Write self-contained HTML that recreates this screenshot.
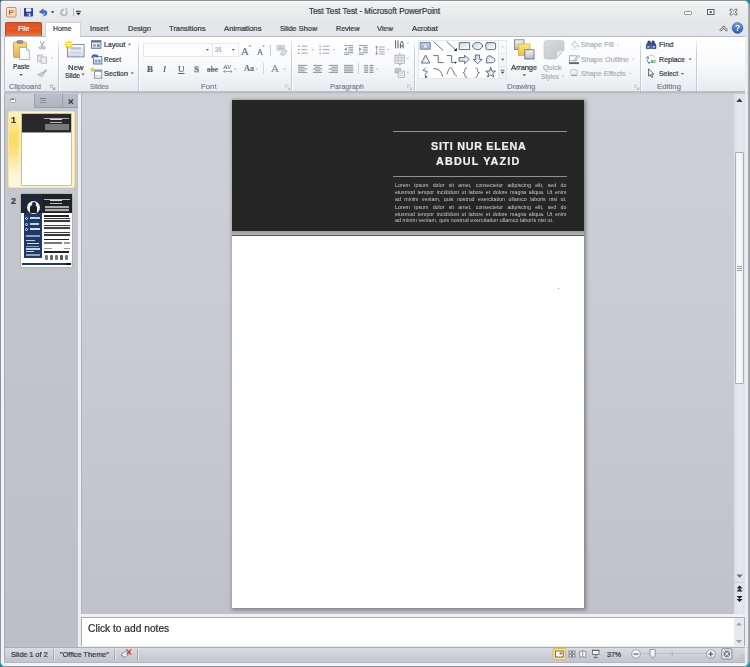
<!DOCTYPE html>
<html><head><meta charset="utf-8">
<style>
*{box-sizing:border-box;margin:0;padding:0}
html,body{width:750px;height:667px;overflow:hidden;background:#e9ecf0;font-family:"Liberation Sans",sans-serif;font-size:7.4px;color:#3b3f45}
.a{position:absolute}
.t{position:absolute;white-space:nowrap;line-height:10px;color:#30343a;-webkit-text-stroke:0.22px;will-change:transform}
#win{position:absolute;left:0;top:0;width:750px;height:667px;background:#e8eaed;overflow:hidden}
#titlebar{left:0;top:0;width:750px;height:22px;background:linear-gradient(#f3f4f5,#eceded 40%,#e6e7e9)}
#tabsrow{left:0;top:21px;width:750px;height:16px;background:linear-gradient(#e6e7e9,#e3e5e8)}
#ribbon{left:4px;top:36px;width:742px;height:56.3px;background:linear-gradient(#ffffff 0%,#f8f9fb 50%,#e8ebef 100%);border:1px solid #b9bec6;border-radius:2px}
.sep{position:absolute;top:38px;width:2px;height:53.4px;background:linear-gradient(90deg,#c6cad0 0,#c6cad0 50%,rgba(255,255,255,.85) 50%);-webkit-mask-image:linear-gradient(rgba(0,0,0,0),#000 30%);mask-image:linear-gradient(rgba(0,0,0,0),#000 30%)}
.gl{color:#7d828b}
.dis{color:#a9adb4}
.w{color:#fff}
.c{transform:translateX(-50%)}
.sf{font-family:"Liberation Serif",serif;font-size:9px;color:#5a5f68}
</style></head><body>
<div id="win">
<div class="a" id="titlebar"></div>
<div class="a" id="tabsrow"></div>

<div class="a" style="left:5px;top:21.5px;width:37px;height:15px;background:linear-gradient(#d8532e,#e85c2a 42%,#e24e1e 52%,#f07e46);border:1px solid #b8482a;border-bottom:none;border-radius:2px 2px 0 0"></div>
<div class="a" style="left:44.5px;top:21.5px;width:36px;height:15.5px;background:#fff;border:1px solid #cdd0d6;border-bottom:none;border-radius:2px 2px 0 0"></div>
<div class="a" id="ribbon"></div>
<div class="a" style="left:45.5px;top:36px;width:34px;height:1px;background:#fff"></div>
<div class="sep" style="left:58px"></div>
<div class="sep" style="left:138px"></div>
<div class="sep" style="left:291px"></div>
<div class="sep" style="left:414px"></div>
<div class="sep" style="left:640px"></div>
<div class="sep" style="left:696px"></div>
<div class="a" style="left:143px;top:43px;width:70px;height:14px;border:1px solid #e6e8ec;background:#fdfdfe"></div>
<div class="a" style="left:212px;top:43px;width:27px;height:14px;border:1px solid #e6e8ec;background:#fdfdfe"></div>
<div class="t sf" style="left:146.5px;top:63.5px;font-weight:bold">B</div>
<div class="t sf" style="left:163px;top:63.5px;font-style:italic">I</div>
<div class="t sf" style="left:177.5px;top:63.5px;text-decoration:underline">U</div>
<div class="t sf" style="left:194px;top:63.5px;font-weight:bold;color:#777c85;text-shadow:0.6px 0.6px 0.5px #b5b9c0">S</div>
<div class="t sf" style="left:207px;top:64.5px;font-size:7.4px;font-weight:bold;text-decoration:line-through;color:#70757e;-webkit-text-stroke:0.1px">abc</div>
<div class="t sf" style="left:223.3px;top:62.6px;font-size:6.6px;line-height:8px;color:#6c717a;letter-spacing:-0.2px;-webkit-text-stroke:0.1px">AV</div>
<div class="t sf" style="left:243.6px;top:64.2px;font-size:8.4px;color:#6f747d;font-weight:bold;-webkit-text-stroke:0.12px">Aa</div>
<div class="t sf" style="left:241px;top:44.5px;font-size:11px;line-height:12px;color:#6c717a">A</div>
<div class="t sf" style="left:257px;top:47px;font-size:8.5px;color:#6c717a">A</div>
<div class="t sf" style="left:270.5px;top:62px;font-size:11px;line-height:12px;color:#8a8f98">A</div>
<div class="a" style="left:270px;top:45px;width:1px;height:11px;background:#c9cdd3"></div>
<div class="a" style="left:263px;top:63px;width:1px;height:11px;background:#d3d6dc"></div>
<div class="a" style="left:358px;top:63px;width:1px;height:11px;background:#d3d6dc"></div>
<div class="a" style="left:418px;top:40px;width:81px;height:39px;border:1px solid #e3e6ea;background:#fff"></div>
<div class="a" style="left:498px;top:40px;width:9px;height:39px;border:1px solid #e3e6ea;background:linear-gradient(#fbfcfd,#eef0f3)"></div>
<div class="a" style="left:498px;top:53px;width:9px;height:1px;background:#e3e6ea"></div>
<div class="a" style="left:498px;top:66px;width:9px;height:1px;background:#e3e6ea"></div>
<div class="t " style="left:309.3px;top:5.8px;font-size:8.4px;transform-origin:0 50%;transform:scaleX(0.9570);color:#30343a;">Test Test Test - Microsoft PowerPoint</div>
<div class="t w" style="left:17.6px;top:23.5px;font-size:7.8px;transform-origin:0 50%;transform:scaleX(0.9070);">File</div>
<div class="t " style="left:53.0px;top:23.5px;font-size:7.8px;transform-origin:0 50%;transform:scaleX(0.8940);">Home</div>
<div class="t " style="left:90.4px;top:23.5px;font-size:7.8px;transform-origin:0 50%;transform:scaleX(0.9535);">Insert</div>
<div class="t " style="left:128.0px;top:23.5px;font-size:7.8px;transform-origin:0 50%;transform:scaleX(0.9473);">Design</div>
<div class="t " style="left:169.0px;top:23.5px;font-size:7.8px;transform-origin:0 50%;transform:scaleX(0.9668);">Transitions</div>
<div class="t " style="left:224.0px;top:23.5px;font-size:7.8px;transform-origin:0 50%;transform:scaleX(0.9745);">Animations</div>
<div class="t " style="left:280.0px;top:23.5px;font-size:7.8px;transform-origin:0 50%;transform:scaleX(0.9558);">Slide Show</div>
<div class="t " style="left:335.5px;top:23.5px;font-size:7.8px;transform-origin:0 50%;transform:scaleX(0.9267);">Review</div>
<div class="t " style="left:377.3px;top:23.5px;font-size:7.8px;transform-origin:0 50%;transform:scaleX(0.9543);">View</div>
<div class="t " style="left:411.5px;top:23.5px;font-size:7.8px;transform-origin:0 50%;transform:scaleX(0.9598);">Acrobat</div>
<div class="t gl" style="left:9.0px;top:81.8px;font-size:7.8px;transform-origin:0 50%;transform:scaleX(0.9585);">Clipboard</div>
<div class="t gl" style="left:89.6px;top:81.8px;font-size:7.8px;transform-origin:0 50%;transform:scaleX(0.8802);">Slides</div>
<div class="t gl" style="left:201.3px;top:81.8px;font-size:7.8px;transform-origin:0 50%;transform:scaleX(0.9867);">Font</div>
<div class="t gl" style="left:330.0px;top:81.8px;font-size:7.8px;transform-origin:0 50%;transform:scaleX(0.9334);">Paragraph</div>
<div class="t gl" style="left:507.3px;top:81.8px;font-size:7.8px;transform-origin:0 50%;transform:scaleX(0.9926);">Drawing</div>
<div class="t gl" style="left:657.0px;top:81.8px;font-size:7.8px;transform-origin:0 50%;transform:scaleX(1.0063);">Editing</div>
<div class="t " style="left:12.7px;top:62.1px;font-size:7.8px;transform-origin:0 50%;transform:scaleX(0.8323);">Paste</div>
<div class="t " style="left:67.5px;top:63.0px;font-size:7.8px;transform-origin:0 50%;transform:scaleX(0.9933);">New</div>
<div class="t " style="left:65.0px;top:71.1px;font-size:7.8px;transform-origin:0 50%;transform:scaleX(0.8648);">Slide</div>
<div class="t " style="left:104.0px;top:39.8px;font-size:7.8px;transform-origin:0 50%;transform:scaleX(0.9095);">Layout</div>
<div class="t " style="left:104.0px;top:54.9px;font-size:7.8px;transform-origin:0 50%;transform:scaleX(0.8343);">Reset</div>
<div class="t " style="left:104.0px;top:69.3px;font-size:7.8px;transform-origin:0 50%;transform:scaleX(0.9225);">Section</div>
<div class="t dis" style="left:214.7px;top:44.9px;font-size:7.8px;transform-origin:0 50%;transform:scaleX(0.7607);">36</div>
<div class="t " style="left:511.3px;top:63.1px;font-size:7.8px;transform-origin:0 50%;transform:scaleX(0.9369);">Arrange</div>
<div class="t dis" style="left:543.3px;top:63.1px;font-size:7.8px;transform-origin:0 50%;transform:scaleX(0.9379);">Quick</div>
<div class="t dis" style="left:541.3px;top:71.7px;font-size:7.8px;transform-origin:0 50%;transform:scaleX(0.8474);">Styles</div>
<div class="t dis" style="left:581.3px;top:39.9px;font-size:7.8px;transform-origin:0 50%;transform:scaleX(0.9428);">Shape Fill</div>
<div class="t dis" style="left:581.3px;top:54.9px;font-size:7.8px;transform-origin:0 50%;transform:scaleX(0.9710);">Shape Outline</div>
<div class="t dis" style="left:581.3px;top:69.3px;font-size:7.8px;transform-origin:0 50%;transform:scaleX(0.9231);">Shape Effects</div>
<div class="t " style="left:658.8px;top:39.9px;font-size:7.8px;transform-origin:0 50%;transform:scaleX(0.9556);">Find</div>
<div class="t " style="left:658.8px;top:54.9px;font-size:7.8px;transform-origin:0 50%;transform:scaleX(0.9085);">Replace</div>
<div class="t " style="left:658.8px;top:69.3px;font-size:7.8px;transform-origin:0 50%;transform:scaleX(0.8857);">Select</div>
<svg class="a" style="left:0;top:0" width="750" height="94" viewBox="0 0 750 94">
<defs>
<linearGradient id="gb" x1="0" y1="0" x2="0" y2="1"><stop offset="0" stop-color="#fdfeff"/><stop offset="1" stop-color="#cfdbe8"/></linearGradient>
<linearGradient id="gy" x1="0" y1="0" x2="0" y2="1"><stop offset="0" stop-color="#f7d98a"/><stop offset="1" stop-color="#e6b04a"/></linearGradient>
<linearGradient id="gg" x1="0" y1="0" x2="0" y2="1"><stop offset="0" stop-color="#e6e7ea"/><stop offset="1" stop-color="#c4c6cb"/></linearGradient>
<linearGradient id="gh" x1="0" y1="0" x2="0" y2="1"><stop offset="0" stop-color="#6fa0dd"/><stop offset="1" stop-color="#2a5cab"/></linearGradient>
</defs>
<!-- QAT -->
<rect x="6.5" y="7.5" width="9.5" height="9.5" rx="1" fill="#fbe1cc" stroke="#b47a5c" stroke-width="0.8"/>
<text x="11.2" y="15.3" font-family="Liberation Sans,sans-serif" font-weight="bold" font-size="8" fill="#cc651c" text-anchor="middle">P</text>
<line x1="20.5" y1="8" x2="20.5" y2="16" stroke="#d5d8dd" stroke-width="1"/>
<rect x="24" y="8" width="9" height="8.6" rx="0.8" fill="#2f3f95"/>
<rect x="26" y="8.3" width="5.2" height="3.4" fill="#eef2fa"/>
<rect x="27" y="13.3" width="3.6" height="3" fill="#c9d3ee"/>
<rect x="27.3" y="13.8" width="1.3" height="2.2" fill="#2f3f95"/>
<path d="M38.8 12 L43.4 8.2 L43.6 10.4 C46.6 10 48 12 47 14.2 C46.2 15.6 44.4 16.2 42.4 16.2 C44.2 15.4 45 14.2 44.4 13.2 C44 12.6 43.8 12.6 43.6 12.6 L43.8 14.8 Z" fill="#3a6cc8"/>
<path d="M51 11.3 L54.4 11.3 L52.7 13.3Z" fill="#222"/>
<path d="M64 9.6 A2.9 2.9 0 1 0 66.6 11.4" fill="none" stroke="#b3b7bd" stroke-width="1.9"/>
<path d="M64.6 8.4 L67.6 8.6 L66.4 11.4Z" fill="#b3b7bd"/>
<line x1="73.5" y1="8.4" x2="73.5" y2="16" stroke="#aeb2b9" stroke-width="1"/>
<rect x="76" y="10.8" width="4.8" height="1" fill="#222"/>
<path d="M76 12.8 L80.8 12.8 L78.4 15.2Z" fill="#222"/>
<!-- window controls -->
<rect x="684.5" y="11.5" width="7" height="3" rx="0.8" fill="#fbfbfc" stroke="#7d838c" stroke-width="0.9"/>
<rect x="707.5" y="9.5" width="6.5" height="5" fill="#fbfbfc" stroke="#4a4f57" stroke-width="0.9"/>
<rect x="709.6" y="11.2" width="2.3" height="1.8" fill="#4a4f57"/>
<path d="M730 9.3 L731.8 9.3 L733.5 10.9 L735.2 9.3 L737 9.3 L737 10.6 L735 12.1 L737 13.6 L737 14.9 L735.2 14.9 L733.5 13.3 L731.8 14.9 L730 14.9 L730 13.6 L732 12.1 L730 10.6Z" fill="#fbfbfc" stroke="#5f646c" stroke-width="0.9" stroke-linejoin="round"/>
<path d="M720.6 30.2 L723.6 27 L726.6 30.2" fill="none" stroke="#6a6f78" stroke-width="2.4" stroke-linejoin="round" stroke-linecap="round"/>
<path d="M720.6 30.2 L723.6 27 L726.6 30.2" fill="none" stroke="#ffffff" stroke-width="0.9" stroke-linejoin="round" stroke-linecap="round"/>
<circle cx="737.5" cy="28" r="5.4" fill="url(#gh)" stroke="#2d5596" stroke-width="0.6"/>
<text x="737.5" y="31.2" font-family="Liberation Sans,sans-serif" font-weight="bold" font-size="8.6" fill="#fff" text-anchor="middle">?</text>
<!-- Clipboard group -->
<rect x="13.5" y="42" width="13" height="15.5" rx="1.2" fill="url(#gy)" stroke="#c99a3c" stroke-width="0.8"/>
<rect x="17" y="40.6" width="6" height="2.8" rx="0.8" fill="#8d9097" stroke="#6d7077" stroke-width="0.5"/>
<path d="M19.5 47.5 L26.5 47.5 L29.3 50.3 L29.3 59.5 L19.5 59.5Z" fill="#fbfcfe" stroke="#9aa3b4" stroke-width="0.8"/>
<path d="M26.5 47.5 L26.5 50.3 L29.3 50.3" fill="#dfe5ee" stroke="#9aa3b4" stroke-width="0.6"/>
<path d="M19.2 74 L22.8 74 L21 76Z" fill="#555a62"/>
<g stroke="#9a9ea6" fill="none" stroke-width="1">
<path d="M40.4 41.2 L43.2 46.6 M44.2 41.2 L41.4 46.6"/>
<circle cx="40.7" cy="47.8" r="1.2"/><circle cx="43.9" cy="47.8" r="1.2"/>
</g>
<rect x="37.5" y="55" width="5" height="6.3" fill="#e4e6ea" stroke="#a9adb5" stroke-width="0.7"/>
<rect x="41" y="57" width="5.4" height="6.2" fill="#eceef1" stroke="#a9adb5" stroke-width="0.7"/>
<path d="M50.5 57.5 L53 57.5 L51.7 59Z" fill="#b5b9c0"/>
<path d="M45.8 69.2 L47.2 70.4 L43.5 74.2 L41.8 72.8Z" fill="#b0b3ba"/>
<path d="M41.6 72.6 L43.8 74.5 L41.5 77 L37.4 74.6Z" fill="#c5c8ce" stroke="#a4a8af" stroke-width="0.5"/>
<path d="M50.6 85.2 L50.6 88.2 M50.6 85.2 L53.6 85.2" stroke="#9a9ea6" stroke-width="0.8" fill="none"/>
<path d="M52.2 87 L54.8 89.4 M54.9 87.3 L54.9 89.5 L52.6 89.5" stroke="#8a8e96" stroke-width="0.8" fill="none"/>
<!-- Slides group -->
<rect x="67.5" y="44.5" width="16.6" height="12.4" fill="url(#gb)" stroke="#7b8696" stroke-width="0.9"/>
<rect x="70.5" y="47.2" width="10.6" height="2.4" fill="#b7c3d3"/>
<rect x="70.5" y="51.6" width="10.6" height="1.8" fill="#c9d4e3"/>
<g stroke="#f0d21e" stroke-width="1.5"><path d="M68.7 40.8 L68.7 48.6 M64.6 44.7 L72.9 44.7 M65.7 41.8 L71.7 47.6 M71.7 41.8 L65.7 47.6"/></g>
<circle cx="68.7" cy="44.7" r="1.7" fill="#fff6a0"/>
<path d="M81.4 73.6 L84.6 73.6 L83 75.4Z" fill="#555a62"/>
<rect x="91.5" y="40.7" width="9.4" height="7.6" fill="url(#gb)" stroke="#5f7088" stroke-width="0.9"/>
<rect x="91.5" y="40.7" width="9.4" height="1.8" fill="#5f7088"/>
<rect x="93" y="44" width="3" height="3" fill="#9fb0c8"/>
<rect x="97" y="44" width="2.6" height="3" fill="#7d92b2"/>
<path d="M128 43.8 L131 43.8 L129.5 45.5Z" fill="#555a62"/>
<rect x="93.6" y="56.6" width="8.2" height="7.4" fill="url(#gb)" stroke="#5f7088" stroke-width="0.9"/>
<rect x="95" y="59.6" width="2.4" height="3" fill="#8ea2c0"/>
<rect x="98.2" y="59.6" width="2.4" height="3" fill="#8ea2c0"/>
<path d="M91.4 57.8 C91.2 54.6 94.6 53.4 96.8 55 L97.6 54 L98 57.4 L94.6 57 L95.6 56 C94.4 55.2 92.8 56 93 57.8Z" fill="#2f5fb4"/>
<rect x="94.4" y="70" width="7.4" height="8.2" fill="#fbfcfe" stroke="#7b8696" stroke-width="0.9"/>
<rect x="94.4" y="70" width="7.4" height="1.8" fill="#8d98a8"/>
<rect x="94.4" y="75.4" width="7.4" height="0.8" fill="#b7c0cf"/>
<g stroke="#ecc820" stroke-width="0.9"><path d="M92.6 67.2 L92.6 72 M90.2 69.6 L95 69.6 M91 68 L94.3 71.2 M94.3 68 L91 71.2"/></g>
<path d="M130.8 72.6 L133.8 72.6 L132.3 74.3Z" fill="#555a62"/>
</svg>
<svg class="a" style="left:0;top:0" width="750" height="94" viewBox="0 0 750 94">
<defs>
<linearGradient id="sb" x1="0" y1="0" x2="1" y2="1"><stop offset="0" stop-color="#c9d9e8"/><stop offset="1" stop-color="#ffffff"/></linearGradient>
<linearGradient id="qs" x1="0" y1="0" x2="1" y2="1"><stop offset="0" stop-color="#d9dadd"/><stop offset="1" stop-color="#c2c4c8"/></linearGradient>
<linearGradient id="ag" x1="0" y1="0" x2="0" y2="1"><stop offset="0" stop-color="#f4f5f7"/><stop offset="1" stop-color="#b4b9c2"/></linearGradient>
<linearGradient id="ay" x1="0" y1="0" x2="0" y2="1"><stop offset="0" stop-color="#fbe58a"/><stop offset="1" stop-color="#e9c23c"/></linearGradient>
</defs>
<!-- Font group small glyphs -->
<path d="M206 49 L209 49 L207.5 50.8Z" fill="#555a62"/>
<path d="M231.8 49 L234.8 49 L233.3 50.8Z" fill="#555a62"/>
<path d="M248.6 46.6 L250 44.8 L251.4 46.6Z" fill="#8a8f98"/>
<path d="M262.2 45.6 L263.5 47.2 L264.8 45.6Z" fill="#8a8f98"/>
<!-- clear formatting -->
<g opacity="0.9">
<rect x="277" y="45.6" width="7.4" height="4.6" fill="#e4e6ea" stroke="#a2a6ae" stroke-width="0.6"/>
<path d="M278.2 47 L283.2 47 M278.2 48.6 L283.2 48.6" stroke="#8d929a" stroke-width="0.7"/>
<path d="M284.6 49.2 L287.4 51.2 L283.6 55.4 L280.6 53.4Z" fill="#d5d7dc" stroke="#9a9ea6" stroke-width="0.6"/>
<path d="M280 54 L283 56" stroke="#b0b4bb" stroke-width="0.8"/>
</g>
<!-- AV arrows -->
<path d="M223.6 71.5 L232 71.5 M223.6 71.5 L225 70.3 M223.6 71.5 L225 72.7 M232 71.5 L230.6 70.3 M232 71.5 L230.6 72.7" stroke="#7d828b" stroke-width="0.7" fill="none"/>
<path d="M234 68.6 L236.6 68.6 L235.3 70.1Z" fill="#b5b9c0"/>
<path d="M255.4 68.6 L258 68.6 L256.7 70.1Z" fill="#b5b9c0"/>
<path d="M283.4 68.6 L286 68.6 L284.7 70.1Z" fill="#b5b9c0"/>
<path d="M285.6 85.2 L285.6 88.2 M285.6 85.2 L288.6 85.2" stroke="#c0c4ca" stroke-width="0.8" fill="none"/>
<path d="M287.2 87 L289.8 89.4 M289.9 87.3 L289.9 89.5 L287.6 89.5" stroke="#b5b9c0" stroke-width="0.8" fill="none"/>
<!-- Paragraph row1 -->
<g stroke="#9a9ea6" stroke-width="0.9" fill="none">
<path d="M301.4 46.2 L307.4 46.2 M301.4 49.7 L307.4 49.7 M301.4 53.2 L307.4 53.2"/>
<path d="M322.8 46.2 L329.4 46.2 M322.8 49.7 L329.4 49.7 M322.8 53.2 L329.4 53.2"/>
</g>
<g fill="#8a8f98"><rect x="298.2" y="45.6" width="1.4" height="1.3"/><rect x="298.2" y="49.1" width="1.4" height="1.3"/><rect x="298.2" y="52.6" width="1.4" height="1.3"/>
<rect x="319.6" y="45.2" width="1" height="2"/><rect x="319.6" y="48.7" width="1" height="2"/><rect x="319.6" y="52.2" width="1" height="2"/></g>
<path d="M311.4 49 L314 49 L312.7 50.5Z" fill="#b5b9c0"/>
<path d="M332.8 49 L335.4 49 L334.1 50.5Z" fill="#b5b9c0"/>
<g stroke="#8d929a" stroke-width="0.9" fill="none">
<path d="M344.2 45.6 L353.2 45.6 M348.4 47.4 L353.2 47.4 M348.4 49.2 L353.2 49.2 M348.4 51 L353.2 51 M344.2 52.8 L353.2 52.8 M344.2 54.4 L349 54.4"/>
<path d="M358.8 45.6 L367.8 45.6 M363 47.4 L367.8 47.4 M363 49.2 L367.8 49.2 M363 51 L367.8 51 M358.8 52.8 L367.8 52.8 M358.8 54.4 L363.6 54.4"/>
</g>
<path d="M346.8 47.2 L344.2 49.2 L346.8 51.2Z" fill="#8d929a"/>
<path d="M359 47.2 L361.6 49.2 L359 51.2Z" fill="#8d929a"/>
<g stroke="#9a9ea6" stroke-width="0.9" fill="none">
<path d="M379 47 L384.8 47 M379 49.4 L384.8 49.4 M379 51.8 L384.8 51.8 M379 54 L384.8 54"/>
<path d="M376.6 46 L376.6 54.4"/>
</g>
<path d="M375.2 47.4 L376.6 45.4 L378 47.4Z M375.2 53 L376.6 55 L378 53Z" fill="#8a8f98"/>
<path d="M386.8 49 L389.4 49 L388.1 50.5Z" fill="#b5b9c0"/>
<!-- Paragraph row 2 -->
<g stroke="#8d929a" stroke-width="1" fill="none">
<path d="M298 65.4 L307.4 65.4 M298 67.2 L304.6 67.2 M298 69 L307.4 69 M298 70.8 L304.6 70.8 M298 72.4 L307.4 72.4"/>
<path d="M313.2 65.4 L322.2 65.4 M314.8 67.2 L320.6 67.2 M313.2 69 L322.2 69 M314.8 70.8 L320.6 70.8 M313.2 72.4 L322.2 72.4"/>
<path d="M328.6 65.4 L338 65.4 M331.4 67.2 L338 67.2 M328.6 69 L338 69 M331.4 70.8 L338 70.8 M328.6 72.4 L338 72.4"/>
<path d="M344 65.4 L353.2 65.4 M344 67.2 L353.2 67.2 M344 69 L353.2 69 M344 70.8 L353.2 70.8 M344 72.4 L353.2 72.4"/>
<path d="M364.2 65.4 L368.2 65.4 M364.2 67.2 L368.2 67.2 M364.2 69 L368.2 69 M364.2 70.8 L368.2 70.8 M364.2 72.4 L368.2 72.4 M369.6 65.4 L373.4 65.4 M369.6 67.2 L373.4 67.2 M369.6 69 L373.4 69 M369.6 70.8 L373.4 70.8 M369.6 72.4 L373.4 72.4"/>
</g>
<path d="M376 68.6 L378.6 68.6 L377.3 70.1Z" fill="#b5b9c0"/>
<!-- text direction / align text / smartart -->
<g stroke="#4f545c" stroke-width="0.95" fill="none">
<path d="M395.6 40.4 L395.6 48.4 M398 40.4 L398 48.4"/>
<path d="M400.4 48.4 L400.4 43.6 L401.8 41 L403.2 43.6 L403.2 48.4 M400.4 46 L403.2 46"/>
</g>
<path d="M406.6 42.6 L409.2 42.6 L407.9 44.1Z" fill="#b5b9c0"/>
<rect x="395" y="55.2" width="9.6" height="8" fill="#eceef1" stroke="#9a9ea6" stroke-width="0.7"/>
<path d="M395 57.8 L404.6 57.8 M395 60.4 L404.6 60.4 M398.2 55.2 L398.2 63.2 M401.4 55.2 L401.4 63.2" stroke="#a9adb5" stroke-width="0.6"/>
<path d="M398.6 54.2 L399.8 53 L401 54.2Z M398.6 64.2 L399.8 65.4 L401 64.2Z" fill="#8a8f98"/>
<path d="M406.6 57.6 L409.2 57.6 L407.9 59.1Z" fill="#b5b9c0"/>
<path d="M395 68.4 L400.6 68.4 L400.6 73 L395 73Z" fill="#c4c7cd" stroke="#a2a6ae" stroke-width="0.6"/>
<rect x="398.2" y="71" width="6.4" height="6.6" fill="#eceef1" stroke="#a2a6ae" stroke-width="0.7"/>
<path d="M399.6 73 L403.2 73 M399.6 75.2 L403.2 75.2" stroke="#b5b9c0" stroke-width="0.7"/>
<path d="M406.6 71.8 L409.2 71.8 L407.9 73.3Z" fill="#b5b9c0"/>
<path d="M407.6 85.2 L407.6 88.2 M407.6 85.2 L410.6 85.2" stroke="#c0c4ca" stroke-width="0.8" fill="none"/>
<path d="M409.2 87 L411.8 89.4 M411.9 87.3 L411.9 89.5 L409.6 89.5" stroke="#b5b9c0" stroke-width="0.8" fill="none"/>
<!-- Shapes gallery -->
<g stroke="#3d4c5e" stroke-width="0.8" fill="none" stroke-linejoin="round" stroke-linecap="round">
<rect x="420.6" y="42.4" width="9.6" height="6.8" fill="#a9bdd6" stroke="#5a6f8e"/>
<path d="M433.8 41.8 L443 50.4"/>
<path d="M447 41.8 L455.8 50"/>
<rect x="459.6" y="42.6" width="10" height="7" fill="url(#sb)"/>
<ellipse cx="477.6" cy="46" rx="5" ry="3.6" fill="url(#sb)"/>
<rect x="485.8" y="42.6" width="9.8" height="7" rx="1.6" fill="url(#sb)"/>
<path d="M425.8 55.4 L429.8 63 L421.8 63Z" fill="url(#sb)"/>
<path d="M433.6 55.6 L438.2 55.6 L438.2 62.6 L443.2 62.6"/>
<path d="M447 55.6 L451.6 55.6 L451.6 62.6 L455.6 62.6"/>
<path d="M459.4 57.6 L464.6 57.6 L464.6 55.2 L469.2 59.4 L464.6 63.6 L464.6 61.2 L459.4 61.2Z" fill="url(#sb)"/>
<path d="M475.6 55 L479.6 55 L479.6 59.4 L482 59.4 L477.6 63.8 L473.2 59.4 L475.6 59.4Z" fill="url(#sb)"/>
<path d="M486.6 62.6 L486.6 58.6 C486.6 55.6 491.4 54.6 492.4 57.8 C495.6 57.4 496 62.6 492.6 62.6Z" fill="url(#sb)"/>
<path d="M425.6 67.8 L423 70.4 L427.4 71.6 L425 74.6 L426.6 77"/>
<path d="M433.6 68.6 C438.6 68.4 441.8 71.6 442.6 76.4"/>
<path d="M447 74 C449.6 66 451.4 66.4 453.2 71 C454.2 73.6 455 75.4 456.6 76.2"/>
<path d="M466.6 68 C464.6 68 464.8 69.4 464.8 70.6 C464.8 72 464 72.4 463 72.6 C464 72.8 464.8 73.2 464.8 74.6 C464.8 75.8 464.6 77.2 466.6 77.2"/>
<path d="M475.8 68 C477.8 68 477.6 69.4 477.6 70.6 C477.6 72 478.4 72.4 479.4 72.6 C478.4 72.8 477.6 73.2 477.6 74.6 C477.6 75.8 477.8 77.2 475.8 77.2"/>
<path d="M490.7 67.6 L492 71 L495.6 71.2 L492.8 73.4 L493.8 77 L490.7 75 L487.6 77 L488.6 73.4 L485.8 71.2 L489.4 71Z" fill="url(#sb)"/>
</g>
<path d="M456.4 48.6 L456.6 50.8 L454.4 50.6Z" fill="#222" stroke="#222" stroke-width="0.8"/>
<path d="M455 61.4 L456.8 62.6 L455 63.8Z" fill="#222"/>
<path d="M425.6 78.4 L427.4 76 L424.8 76.2Z" fill="#3d4c5e"/>
<text x="425.4" y="47.6" font-family="Liberation Sans,sans-serif" font-weight="bold" font-size="4.6" fill="#fff" text-anchor="middle">A</text>
<path d="M421.4 44 L424 44 M427 44 L429.4 44" stroke="#e6edf6" stroke-width="0.6"/>
<path d="M501.2 47.4 L502.6 45.6 L504 47.4Z" fill="#c9ccd2"/>
<path d="M501 58.8 L504.2 58.8 L502.6 60.6Z" fill="#3c4048"/>
<path d="M500.8 70.2 L504.4 70.2" stroke="#3c4048" stroke-width="0.8"/>
<path d="M500.8 71.8 L504.4 71.8 L502.6 73.8Z" fill="#3c4048"/>
<!-- Arrange -->
<rect x="514.4" y="39.8" width="9.6" height="9.6" fill="url(#ag)" stroke="#6b7380" stroke-width="0.8"/>
<rect x="518.6" y="44" width="11.4" height="11.4" fill="url(#ay)" stroke="#d9b23c" stroke-width="0.8"/>
<rect x="524.8" y="49.8" width="9.2" height="9.2" fill="url(#ag)" stroke="#5f6874" stroke-width="0.8"/>
<path d="M522.6 74.2 L526 74.2 L524.3 76.2Z" fill="#555a62"/>
<!-- Quick styles -->
<path d="M546.6 40.4 L561.4 40.4 C563 40.4 564 41.4 564 43 L564 50 L556 59 L546.6 59 C545 59 544 58 544 56.4 L544 43 C544 41.4 545 40.4 546.6 40.4Z" fill="url(#qs)" stroke="#c0c2c7" stroke-width="0.6"/>
<path d="M564 49.6 C561 51 558.4 51.4 556.6 51 C557.4 53.4 556.8 56.4 555.6 59 Z" fill="#eceef1" stroke="#c5c7cc" stroke-width="0.5"/>
<path d="M562 75.4 L564.6 75.4 L563.3 76.9Z" fill="#b5b9c0"/>
<!-- shape fill -->
<g opacity="0.95">
<path d="M571.6 44.4 L575 41.8 L578.4 45 L574.6 47.6Z" fill="#f2f3f5" stroke="#a9adb5" stroke-width="0.7"/>
<path d="M573.4 42.4 C573.2 40.8 575.4 40.6 575.4 42.4" fill="none" stroke="#a9adb5" stroke-width="0.6"/>
<path d="M578.6 45.4 C579.5 46.6 579.5 47.6 578.6 47.6 C577.9 47.6 577.9 46.6 578.6 45.4Z" fill="#b5b9c0"/>
<rect x="570" y="48.6" width="9" height="1.2" fill="#e6e8eb"/>
<path d="M616.8 44.4 L619.4 44.4 L618.1 45.9Z" fill="#c0c4ca"/>
</g>
<!-- shape outline -->
<rect x="569.6" y="55.8" width="6.6" height="5" fill="#fafbfc" stroke="#8a8f98" stroke-width="0.7"/>
<path d="M574.4 59.8 L578.4 55 L579.6 56 L575.6 60.6 L574 61Z" fill="#e3e5e9" stroke="#8a8f98" stroke-width="0.55"/>
<rect x="569" y="62.2" width="10" height="1.9" fill="#5f646c"/>
<path d="M632 58.6 L634.6 58.6 L633.3 60.1Z" fill="#c0c4ca"/>
<!-- shape effects -->
<rect x="570.4" y="69.6" width="7" height="5" rx="1.2" fill="#eceef1" stroke="#b5b9c0" stroke-width="0.7"/>
<path d="M571.2 75.5 L577 75.5" stroke="#9ea3ab" stroke-width="1.1"/>
<path d="M628.8 72.8 L631.4 72.8 L630.1 74.3Z" fill="#c0c4ca"/>
<path d="M634.6 85.2 L634.6 88.2 M634.6 85.2 L637.6 85.2" stroke="#c0c4ca" stroke-width="0.8" fill="none"/>
<path d="M636.2 87 L638.8 89.4 M638.9 87.3 L638.9 89.5 L636.6 89.5" stroke="#b5b9c0" stroke-width="0.8" fill="none"/>
<!-- Find (binoculars) -->
<g fill="#2f4f9e" stroke="#1b2a55" stroke-width="0.6" stroke-linejoin="round">
<path d="M647.8 42.6 L648.2 41 L650 41 L650.4 42.6 L650.6 48.6 L646.2 48.6 L646.4 45Z"/>
<path d="M654.4 42.6 L654 41 L652.2 41 L651.8 42.6 L651.6 48.6 L656 48.6 L655.8 45Z"/>
</g>
<rect x="650.2" y="43.4" width="1.8" height="2.2" fill="#6f8fd0" stroke="#1b2a55" stroke-width="0.4"/>
<rect x="647.2" y="45.8" width="2.4" height="2" fill="#9fb6e6"/>
<rect x="652.6" y="45.8" width="2.4" height="2" fill="#9fb6e6"/>
<!-- Replace -->
<text x="646.2" y="58.6" font-family="Liberation Sans,sans-serif" font-size="5" fill="#4a4f57">a</text>
<text x="650.6" y="63.4" font-family="Liberation Sans,sans-serif" font-weight="bold" font-size="5" fill="#3c8a3c">ac</text>
<path d="M649.6 55.4 C652.4 54.6 654.4 55.6 654.6 57.6" fill="none" stroke="#8a8f98" stroke-width="0.7" stroke-dasharray="1 0.6"/>
<path d="M647.2 59.6 C647 61.4 648 62.6 649.6 62.8" fill="none" stroke="#3a5fae" stroke-width="0.8"/>
<path d="M648.6 61.6 L650.4 62.9 L648.6 64Z" fill="#3a5fae"/>
<!-- Select cursor -->
<path d="M648.6 68.8 L648.6 76.2 L650.4 74.6 L651.6 77.4 L652.8 76.9 L651.6 74.2 L653.8 74.2Z" fill="#fff" stroke="#3c4048" stroke-width="0.8" stroke-linejoin="round"/>
<path d="M688.6 58.6 L691.6 58.6 L690.1 60.3Z" fill="#555a62"/>
<path d="M681 73 L684 73 L682.5 74.7Z" fill="#555a62"/>
</svg>
<!-- band under ribbon -->
<div class="a" style="left:1px;top:92.3px;width:748px;height:2px;background:linear-gradient(#b4b7bd,#cbced3)"></div>
<!-- left panel -->
<div class="a" style="left:5px;top:94px;width:73px;height:554px;background:linear-gradient(#c6c8cd,#bdbfc4)"></div>
<div class="a" style="left:5px;top:94px;width:29px;height:14px;background:linear-gradient(#cfd4db,#c6cad1)"></div>
<div class="a" style="left:34px;top:94px;width:29px;height:14px;background:linear-gradient(#b9bfc8,#aeb4be);border-left:1px solid #9aa1ac;border-right:1px solid #9aa1ac;border-bottom:1px solid #9aa1ac"></div>
<div class="a" style="left:63px;top:94px;width:15px;height:14px;background:linear-gradient(#b9bfc8,#aeb4be);border-bottom:1px solid #9aa1ac"></div>
<div class="a" style="left:9.8px;top:98px;width:6.2px;height:5.2px;background:#fff;border:0.7px solid #a2a8b2;border-radius:1.2px"></div><div class="a" style="left:11px;top:99.3px;width:3px;height:0.8px;background:#6a6f78"></div>
<div class="a" style="left:40px;top:98px;width:6px;height:1px;background:#7d838c"></div>
<div class="a" style="left:41px;top:100px;width:5px;height:1px;background:#8b9099"></div>
<div class="a" style="left:40px;top:102px;width:6px;height:1px;background:#8b9099"></div>
<svg class="a" style="left:67px;top:98px" width="8" height="8" viewBox="0 0 8 8"><path d="M1.6 1.6 L6 5.8 M6 1.6 L1.6 5.8" stroke="#3c4048" stroke-width="1.4" fill="none"/></svg>
<!-- splitter -->
<div class="a" style="left:78px;top:94px;width:3px;height:552px;background:#eceef1"></div>
<!-- selected thumb -->
<div class="a" style="left:8px;top:111px;width:67px;height:77px;border:1px solid #f3e6a6;border-radius:2px;background:linear-gradient(90deg,rgba(253,244,206,0) 0%,rgba(253,244,206,0) 12%,#fdf4ce 22%),linear-gradient(#fdf3c4 0%,#fbdc6a 30%,#fbdc6a 45%,#fdf6dc 85%)"></div>
<div class="t" style="left:11px;top:114.8px;font-weight:bold;font-size:9px;color:#3e361c">1</div>
<div class="a" style="left:21px;top:113px;width:51px;height:73px;background:#fff;border:1px solid #c9c1a2;border-radius:1px"></div>
<div class="a" style="left:22px;top:114px;width:49px;height:18px;background:#282828"></div>
<div class="a" style="left:22px;top:132px;width:49px;height:1px;background:#9a9a9a"></div>
<div class="a" style="left:44px;top:117.5px;width:25px;height:0.6px;background:#aaa"></div>
<div class="a" style="left:50px;top:119px;width:12px;height:1.4px;background:#ddd"></div>
<div class="a" style="left:50px;top:122px;width:12px;height:1.2px;background:#bbb"></div>
<div class="a" style="left:44.6px;top:124px;width:24.6px;height:6.6px;background:repeating-linear-gradient(#7a7a7a 0,#7a7a7a 0.55px,#2e2e2e 0.55px,#2e2e2e 1.1px)"></div>
<!-- thumb 2 -->
<div class="t" style="left:11px;top:196px;font-weight:bold;font-size:9px;color:#3c4048">2</div>
<div class="a" style="left:21px;top:194px;width:51px;height:73px;background:#fff;box-shadow:0 0 1.5px #7d8088"></div>
<div class="a" style="left:21px;top:194px;width:51px;height:19px;background:#1f2227"></div>
<div class="a" style="left:24px;top:194px;width:18px;height:64px;background:#1f3a66"></div>
<div class="a" style="left:24px;top:194px;width:21px;height:19px;background:#1d2738;margin-left:-3px"></div>
<div class="a" style="left:27px;top:200.5px;width:13px;height:13px;border-radius:50%;background:#f1f1f4"></div>
<div class="a" style="left:31.5px;top:202px;width:4px;height:4px;border-radius:50%;background:#2a2228"></div>
<div class="a" style="left:30px;top:205px;width:7px;height:8px;border-radius:3px 3px 1px 1px;background:#1d1d26"></div>
<div class="a" style="left:44px;top:198.5px;width:26px;height:0.6px;background:#bbb"></div>
<div class="a" style="left:50px;top:200px;width:12px;height:1.4px;background:#ddd"></div>
<div class="a" style="left:50px;top:203px;width:12px;height:1.2px;background:#bbb"></div>
<div class="a" style="left:45px;top:205.5px;width:24px;height:6px;background:repeating-linear-gradient(#aaa 0,#aaa 0.8px,#333 0.8px,#333 1.4px)"></div>
<div class="a" style="left:44px;top:215px;width:25px;height:1.6px;background:#222"></div>
<div class="a" style="left:44px;top:218px;width:26px;height:5px;background:repeating-linear-gradient(#3a3a3a 0,#3a3a3a 0.85px,#f4f4f4 0.85px,#f4f4f4 1.7px)"></div>
<div class="a" style="left:44px;top:225px;width:26px;height:5px;background:repeating-linear-gradient(#444 0,#444 0.85px,#f4f4f4 0.85px,#f4f4f4 1.7px)"></div>
<div class="a" style="left:44px;top:231.5px;width:26px;height:5px;background:repeating-linear-gradient(#3a3a3a 0,#3a3a3a 0.85px,#f4f4f4 0.85px,#f4f4f4 1.7px)"></div>
<div class="a" style="left:44px;top:238.5px;width:25px;height:1.6px;background:#222"></div>
<div class="a" style="left:44px;top:241.5px;width:18px;height:3px;background:repeating-linear-gradient(#777 0,#777 0.6px,#fff 0.6px,#fff 1.4px)"></div>
<div class="a" style="left:64px;top:241.5px;width:6px;height:3px;background:repeating-linear-gradient(#999 0,#999 0.6px,#fff 0.6px,#fff 1.4px)"></div>
<div class="a" style="left:44px;top:247.5px;width:8px;height:1.2px;background:#999"></div>
<div class="a" style="left:64px;top:247.5px;width:6px;height:1.2px;background:#999"></div>
<div class="a" style="left:44px;top:251px;width:25px;height:1.6px;background:#222"></div>
<div class="a" style="left:45px;top:255px;width:3px;height:5px;background:#777;border-radius:1px"></div>
<div class="a" style="left:50px;top:255px;width:3px;height:5px;background:#666;border-radius:1px"></div>
<div class="a" style="left:55px;top:255px;width:3px;height:5px;background:#777;border-radius:1px"></div>
<div class="a" style="left:60px;top:255px;width:3px;height:5px;background:#555;border-radius:1px"></div>
<div class="a" style="left:65px;top:255px;width:3px;height:5px;background:#777;border-radius:1px"></div>
<div class="a" style="left:25px;top:216.5px;width:3.4px;height:3.4px;border-radius:50%;border:0.8px solid #dfe5f0"></div>
<div class="a" style="left:25px;top:222.5px;width:3.4px;height:3.4px;border-radius:50%;border:0.8px solid #dfe5f0"></div>
<div class="a" style="left:25px;top:227.5px;width:3.4px;height:3.4px;border-radius:50%;border:0.8px solid #dfe5f0"></div>
<div class="a" style="left:30px;top:217px;width:10px;height:2.4px;background:repeating-linear-gradient(#c9d2e2 0,#c9d2e2 0.8px,#1f3a66 0.8px,#1f3a66 1.4px)"></div>
<div class="a" style="left:30px;top:223px;width:9px;height:2.4px;background:#c9d2e2"></div>
<div class="a" style="left:30px;top:228px;width:10px;height:2.4px;background:#d5dcea"></div>
<div class="a" style="left:26px;top:235px;width:14px;height:3px;background:repeating-linear-gradient(#8ea0c0 0,#8ea0c0 0.7px,#1f3a66 0.7px,#1f3a66 1.4px)"></div>
<div class="a" style="left:26px;top:239.5px;width:9px;height:1.2px;background:#c9d2e2"></div>
<div class="a" style="left:27px;top:243px;width:12px;height:1.2px;background:#d5dcea"></div>
<div class="a" style="left:26px;top:246px;width:13px;height:1px;background:#8ea0c0"></div>
<div class="a" style="left:26px;top:248px;width:14px;height:1.8px;background:#c9d2e2"></div>
<div class="a" style="left:26px;top:251px;width:8px;height:1.2px;background:#c9d2e2"></div>
<div class="a" style="left:26px;top:254px;width:14px;height:2.5px;background:repeating-linear-gradient(#8ea0c0 0,#8ea0c0 0.7px,#1f3a66 0.7px,#1f3a66 1.4px)"></div>
<div class="a" style="left:22px;top:263px;width:44px;height:1.6px;background:#1f3a66"></div>
<div class="a" style="left:66px;top:263px;width:5px;height:1.6px;background:#111"></div>
<!-- main area -->
<div class="a" style="left:81px;top:94px;width:653px;height:521px;background:linear-gradient(#cdd0d5,#c9ccd1 40%,#c0c2c7)"></div>
<div class="a" style="left:81px;top:94px;width:1px;height:521px;background:#aeb2b9"></div>
<!-- slide -->
<div class="a" style="left:232px;top:100px;width:351.5px;height:508px;background:#fff;box-shadow:1px 1px 3.5px 1px rgba(70,74,80,.55)"></div>
<div class="a" style="left:232px;top:100px;width:351.5px;height:131px;background:#262626"></div>
<div class="a" style="left:232px;top:231px;width:351.5px;height:4.5px;background:linear-gradient(#9c9c9c,#b0b0b0 70%,#5a5a5a 90%)"></div>
<div class="a" style="left:393px;top:131px;width:174px;height:1px;background:#8f8f8f"></div>
<div class="a" style="left:393px;top:176px;width:174px;height:1px;background:#8f8f8f"></div>
<div class="t" style="left:431.4px;top:139.2px;line-height:14px;font-size:10.8px;font-weight:bold;color:#f0f0f0;letter-spacing:0.685px">SITI NUR ELENA</div>
<div class="t" style="left:436.4px;top:154.0px;line-height:14px;font-size:10.8px;font-weight:bold;color:#f0f0f0;letter-spacing:1.144px">ABDUL YAZID</div>

<div class="a" style="left:394.6px;top:182.2px;width:171.4px;height:7px;line-height:7px;font-size:5.3px;color:#c8c8c8;text-align:justify;text-align-last:justify;white-space:nowrap;will-change:transform">Lorem ipsum dolor sit amet, consectetur adipiscing elit, sed do</div>
<div class="a" style="left:394.6px;top:189.2px;width:171.4px;height:7px;line-height:7px;font-size:5.3px;color:#c8c8c8;text-align:justify;text-align-last:justify;white-space:nowrap;will-change:transform">eiusmod tempor incididunt ut labore et dolore magna aliqua. Ut enim</div>
<div class="a" style="left:394.6px;top:196.4px;width:171.4px;height:7px;line-height:7px;font-size:5.3px;color:#c8c8c8;text-align:justify;text-align-last:justify;white-space:nowrap;will-change:transform">ad minim veniam, quis nostrud exercitation ullamco laboris nisi ut.</div>
<div class="a" style="left:394.6px;top:203.8px;width:171.4px;height:7px;line-height:7px;font-size:5.3px;color:#c8c8c8;text-align:justify;text-align-last:justify;white-space:nowrap;will-change:transform">Lorem ipsum dolor sit amet, consectetur adipiscing elit, sed do</div>
<div class="a" style="left:394.6px;top:210.8px;width:171.4px;height:7px;line-height:7px;font-size:5.3px;color:#c8c8c8;text-align:justify;text-align-last:justify;white-space:nowrap;will-change:transform">eiusmod tempor incididunt ut labore et dolore magna aliqua. Ut enim</div>
<div class="a" style="left:394.6px;top:216.6px;height:7px;line-height:7px;font-size:5.3px;color:#c8c8c8;white-space:nowrap;will-change:transform;letter-spacing:0.068px">ad minim veniam, quis nostrud exercitation ullamco laboris nisi ut.</div>

<div class="a" style="left:558px;top:288px;width:1px;height:1px;background:#999"></div>
<!-- v scrollbar -->
<div class="a" style="left:734px;top:94px;width:11px;height:521px;background:linear-gradient(90deg,#d9dde4,#e6e9ef 50%,#dde1e8)"></div>
<div class="a" style="left:735px;top:152px;width:9px;height:232px;background:linear-gradient(90deg,#eef0f4,#fafbfc 50%,#e9ecf1);border:1px solid #a9afba;border-radius:1px"></div>
<div class="a" style="left:737px;top:266px;width:5px;height:1px;background:#9aa0aa"></div>
<div class="a" style="left:737px;top:268px;width:5px;height:1px;background:#9aa0aa"></div>
<div class="a" style="left:737px;top:270px;width:5px;height:1px;background:#9aa0aa"></div>
<svg class="a" style="left:734px;top:94px" width="11" height="521" viewBox="0 0 11 521"><path d="M2.3 8 L5.5 4.3 L8.7 8Z" fill="#3c4048"/><path d="M2.6 480.6 L5.6 484 L8.6 480.6Z" fill="#6a6f78"/><path d="M0 488.4 L11 488.4" stroke="#c3c7ce" stroke-width="0.8"/><path d="M2.6 494.6 L5.6 491.6 L8.6 494.6Z M2.6 497.6 L5.6 494.6 L8.6 497.6Z M2.6 502 L5.6 505 L8.6 502Z M2.6 505 L5.6 508 L8.6 505Z" fill="#1c1e22"/></svg>
<!-- notes -->
<div class="a" style="left:81px;top:614px;width:664px;height:3px;background:#eef0f3"></div>
<div class="a" style="left:81px;top:617px;width:664px;height:29px;background:#fff;border:1px solid #a7abb3;border-bottom:none"></div>
<div class="t " style="left:88.0px;top:623.0px;font-size:10.2px;transform-origin:0 50%;transform:scaleX(1.0027);line-height:12px;color:#2b2b2b;">Click to add notes</div>

<div class="a" style="left:734px;top:618px;width:10px;height:28px;background:#e6e9ee"></div>
<svg class="a" style="left:734px;top:618px" width="10" height="28" viewBox="0 0 10 28"><path d="M2 7.6 L5 4.4 L8 7.6Z M2 22 L5 25.2 L8 22Z" fill="#9aa0aa"/></svg>
<!-- status bar -->
<div class="a" style="left:1px;top:647px;width:748px;height:14.5px;background:linear-gradient(#dadde2,#cdd0d6 45%,#c2c5cb);border-top:1px solid #a9adb5"></div>
<div class="t " style="left:10.6px;top:649.7px;font-size:7.6px;transform-origin:0 50%;transform:scaleX(0.9678);">Slide 1 of 2</div>

<div class="a" style="left:53px;top:649px;width:1px;height:11px;background:#a4a9b2"></div>
<div class="a" style="left:54px;top:649px;width:1px;height:11px;background:#e3e6ea"></div>
<div class="t " style="left:60.0px;top:649.7px;font-size:7.6px;transform-origin:0 50%;transform:scaleX(0.9658);">"Office Theme"</div>
<div class="t " style="left:607.2px;top:649.7px;font-size:7.6px;transform-origin:0 50%;transform:scaleX(0.9204);">37%</div>

<div class="a" style="left:114px;top:649px;width:1px;height:11px;background:#a4a9b2"></div>
<div class="a" style="left:115px;top:649px;width:1px;height:11px;background:#e3e6ea"></div>
<div class="a" style="left:137px;top:649px;width:1px;height:11px;background:#a4a9b2"></div>
<div class="a" style="left:138px;top:649px;width:1px;height:11px;background:#e3e6ea"></div>
<svg class="a" style="left:0;top:640px" width="750" height="27" viewBox="0 640 750 27">
<defs>
<linearGradient id="zc" x1="0" y1="0" x2="0" y2="1"><stop offset="0" stop-color="#ffffff"/><stop offset="1" stop-color="#e3e5e9"/></linearGradient>
</defs>
<!-- spell icon -->
<path d="M121 654 L126.4 651.2 L129.6 653.8 L124.2 657.4Z" fill="#eef2fa" stroke="#5a79b8" stroke-width="0.7"/>
<path d="M121 654 L124.2 657.4 L124.2 658.6 L121 655.4Z" fill="#7f9bd0"/>
<path d="M126.6 649.4 L131.2 654.4 M131.2 649.4 L126.6 654.4" stroke="#d8332a" stroke-width="1.3"/>
<!-- view buttons -->
<rect x="553" y="648.5" width="12.6" height="11" rx="1" fill="#fbe394" stroke="#dfb94a" stroke-width="0.9"/>
<rect x="555.6" y="651" width="7.6" height="6" fill="#fff" stroke="#5a4a2a" stroke-width="0.8"/>
<rect x="559.6" y="652.4" width="2.6" height="2" fill="#8a7a5a"/>
<g fill="#fff" stroke="#5a5f68" stroke-width="0.7">
<rect x="569" y="651" width="2.4" height="2.2"/><rect x="572.6" y="651" width="2.4" height="2.2"/>
<rect x="569" y="654.8" width="2.4" height="2.2"/><rect x="572.6" y="654.8" width="2.4" height="2.2"/>
</g>
<path d="M579.6 651.6 L582.7 650.6 L585.8 651.6 L585.8 657.6 L582.7 656.6 L579.6 657.6Z M582.7 650.6 L582.7 656.6" fill="#f4f5f7" stroke="#6a6f78" stroke-width="0.7"/>
<rect x="592.4" y="650.4" width="6.6" height="4" fill="#f4f5f7" stroke="#5a5f68" stroke-width="0.8"/>
<path d="M595.7 654.4 L595.7 657.2 M593.4 657.6 L598 657.6 M592 650.2 L599.4 650.2" stroke="#5a5f68" stroke-width="0.8"/>
<!-- zoom -->
<circle cx="636" cy="654" r="4.3" fill="url(#zc)" stroke="#8d929a" stroke-width="0.8"/>
<path d="M633.6 654 L638.4 654" stroke="#4a4f57" stroke-width="1.1"/>
<path d="M641.5 654 L706 654" stroke="#9ea3ab" stroke-width="0.7"/>
<path d="M641.5 654.7 L706 654.7" stroke="#e6e8ec" stroke-width="0.6"/>
<path d="M672.2 651.6 L672.2 656.4" stroke="#9ea3ab" stroke-width="0.7"/>
<path d="M650 649.6 L655.2 649.6 L655.2 655.4 L652.6 658.2 L650 655.4Z" fill="url(#zc)" stroke="#7d828b" stroke-width="0.8" stroke-linejoin="round"/>
<circle cx="710.8" cy="654" r="4.3" fill="url(#zc)" stroke="#8d929a" stroke-width="0.8"/>
<path d="M708.4 654 L713.2 654 M710.8 651.6 L710.8 656.4" stroke="#4a4f57" stroke-width="1.1"/>
<rect x="721.8" y="648.8" width="10" height="10.2" rx="1" fill="#f1f2f4" stroke="#6a6f78" stroke-width="0.8"/>
<rect x="723.6" y="650.6" width="6.4" height="6.6" fill="#7d828b"/>
<path d="M723.4 650.4 L725.6 652.6 M730.2 650.4 L728 652.6 M723.4 657.4 L725.6 655.2 M730.2 657.4 L728 655.2" stroke="#fff" stroke-width="0.9"/>
<rect x="725.9" y="652.9" width="1.8" height="2" fill="#fff"/>
<g fill="#aeb2b9"><rect x="743" y="655" width="1.2" height="1.2"/><rect x="743" y="657.4" width="1.2" height="1.2"/><rect x="740.6" y="657.4" width="1.2" height="1.2"/><rect x="743" y="659.8" width="1.2" height="1.2"/><rect x="740.6" y="659.8" width="1.2" height="1.2"/><rect x="738.2" y="659.8" width="1.2" height="1.2"/></g>
</svg>

<!-- window borders -->
<div class="a" style="left:0;top:661.5px;width:750px;height:1px;background:#b4b7bd"></div>
<div class="a" style="left:0;top:662.5px;width:750px;height:4.5px;background:#f1f3f6"></div>
<div class="a" style="left:1px;top:37px;width:3.4px;height:629px;background:#f1f3f6"></div>
<div class="a" style="left:745.3px;top:37px;width:2.2px;height:629px;background:#eceef1"></div>
<div class="a" style="left:4.4px;top:94px;width:0.8px;height:568px;background:#a9acb2"></div>
<div class="a" style="left:0;top:0;width:750px;height:1.2px;background:#8c8f93"></div>
<div class="a" style="left:0;top:1.2px;width:750px;height:1px;background:#fafbfc"></div>
<div class="a" style="left:0;top:0;width:1px;height:667px;background:#8d9297"></div>
<div class="a" style="left:747.5px;top:0;width:2.5px;height:667px;background:linear-gradient(90deg,#b4b8bd,#8d9297)"></div>
<div class="a" style="left:0;top:665.5px;width:750px;height:1.5px;background:#8d9297"></div>
<div class="a" style="left:0;top:663px;width:3px;height:4px;background:linear-gradient(45deg,#1f8aa0 40%,rgba(31,138,160,0) 75%)"></div>
<div class="a" style="left:746px;top:662px;width:4px;height:5px;background:linear-gradient(-45deg,#1f8aa0 40%,rgba(31,138,160,0) 75%)"></div>
<div class="a" style="left:746px;top:0;width:4px;height:5px;background:linear-gradient(-135deg,#1f8aa0 35%,rgba(31,138,160,0) 70%)"></div>
<div class="a" style="left:0;top:0;width:2px;height:3px;background:linear-gradient(135deg,#1f6f9c 35%,rgba(31,111,156,0) 70%)"></div>
</div>
</body></html>
